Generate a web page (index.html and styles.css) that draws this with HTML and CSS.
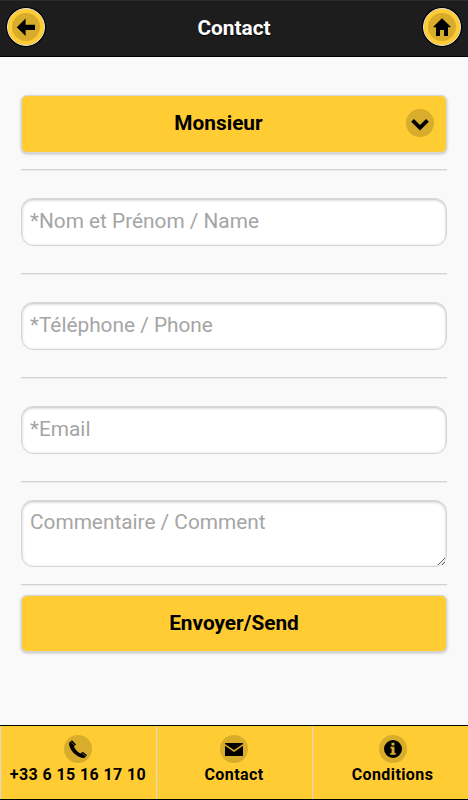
FILE: index.html
```
<!doctype html>
<html lang="fr">
<head>
<meta charset="utf-8">
<meta name="viewport" content="width=device-width, initial-scale=1.0">
<title>Contact</title>
<link rel="stylesheet" href="styles.css">
</head>
<body>

<header class="header">
	<a href="#" class="round-btn" aria-label="Retour">
		<svg class="icon" viewBox="0 0 28 28"><circle cx="14" cy="14" r="14"/><path d="M4.8 14.2L13.6 5.6V11.8H23V17H13.6V23Z"/></svg>
	</a>
	<h1>Contact</h1>
	<a href="#" class="round-btn" aria-label="Accueil">
		<svg class="icon" viewBox="0 0 28 28"><circle cx="14" cy="14" r="14"/><path d="M14 5.2L22.5 13.5V14.2H20V23H16V17H12V23H8V14.2H5.5V13.5Z"/></svg>
	</a>
</header>

<form class="content">
	<div class="field field-select">
		<button type="button" class="btn btn-select">
			<span>Monsieur</span>
			<svg class="icon arrow" viewBox="0 0 28 28"><circle cx="14" cy="14" r="14"/><path d="M7.9 10L5.2 12.7L14 21.5L22.8 12.7L20.1 10L14 16.1Z"/></svg>
		</button>
	</div>
	<div class="field">
		<input type="text" placeholder="*Nom et Prénom / Name">
	</div>
	<div class="field">
		<input type="tel" placeholder="*Téléphone / Phone">
	</div>
	<div class="field">
		<input type="email" placeholder="*Email">
	</div>
	<div class="field field-comment">
		<textarea placeholder="Commentaire / Comment"></textarea>
	</div>
	<button type="button" class="btn send"><span>Envoyer/Send</span></button>
</form>

<footer class="footer">
	<a href="#">
		<svg class="icon" viewBox="0 0 28 28"><circle cx="14" cy="14" r="14"/><path d="M5.2 7.4L8 5.2L12 9.6L9.8 11.8C11.4 14.8 13.6 17 16.4 18.4L18.6 16.8L23 20L21 22.6C19 24 15 22.4 11.6 19.6C7.6 16.4 4.6 11.4 5.2 7.4Z"/><path class="cut" d="M6.6 6.4L10.8 10.8M17.4 17.8L21.8 21.2"/></svg>
		<span>+33 6 15 16 17 10</span>
	</a>
	<a href="#">
		<svg class="icon" viewBox="0 0 28 28"><circle cx="14" cy="14" r="14"/><path d="M5 8H23V9L14 15L5 9ZM5 10.8L14 17L23 10.8V21H5Z"/></svg>
		<span>Contact</span>
	</a>
	<a href="#">
		<svg class="icon" viewBox="0 0 28 28"><circle cx="14" cy="14" r="14"/><path fill-rule="evenodd" d="M14 5A9 9 0 0 1 14 23A9 9 0 0 1 14 5ZM12.5 7.8V10.4H15.5V7.8ZM11.4 11.8V13.4H12.6V18H11.2V19.8H16.8V18H15.5V11.8Z"/></svg>
		<span>Conditions</span>
	</a>
</footer>

</body>
</html>
```

FILE: styles.css
```
* {
	box-sizing: border-box;
}
body {
	display: flex;
	flex-direction: column;
	height: 800px;
	margin: 0;
	background: #f9f9f9;
	color: #000;
	font-family: Roboto, "Liberation Sans", sans-serif;
}
a {
	color: inherit;
	text-decoration: none;
}

/* header */
.header {
	display: flex;
	align-items: center;
	justify-content: space-between;
	height: 57px;
	padding: 0 7px 3px;
	background: #1d1d1d;
	border-top: 1px solid #2a2a2a;
	border-bottom: 1px solid #000;
}
.header h1 {
	margin: 0;
	padding-top: 2px;
	color: #fff;
	font-size: 20.8px;
	line-height: 25px;
	text-shadow: 0 1px 0 #000;
}
.round-btn {
	display: flex;
	align-items: center;
	justify-content: center;
	width: 38px;
	height: 38px;
	background: #fc3;
	border: 1px solid #e4e1d8;
	border-radius: 50%;
	box-shadow: 0 0 0 1px #000;
}

/* icons */
.icon {
	display: block;
	width: 28px;
	height: 28px;
}
.icon circle {
	fill: #d8ad2b;
}
.icon .cut {
	fill: none;
	stroke: #d8ad2b;
	stroke-width: .5;
}

/* form */
.content {
	flex: 1;
	padding: 0 21px;
}
.field {
	height: 104px;
	padding-top: 28px;
	border-bottom: 1px solid #d2d4d3;
	box-shadow: 0 1px 0 #ebebeb;
}
.field-select {
	height: 113px;
	padding-top: 38px;
}
.field-comment {
	height: 103px;
	padding-top: 18px;
}
.btn {
	display: flex;
	align-items: center;
	justify-content: center;
	position: relative;
	width: 100%;
	height: 58px;
	padding: 0 0 2px;
	background: #fc3;
	border: 1px solid #d8d8d8;
	border-radius: 6px;
	box-shadow: 0 1px 3px rgba(0, 0, 0, .25);
	color: #000;
	font: bold 20.8px/26px Roboto, "Liberation Sans", sans-serif;
}
.btn-select {
	padding-right: 31px;
}
.btn .arrow {
	position: absolute;
	right: 12px;
	top: 13px;
}
.send {
	height: 57px;
	margin-top: 10px;
}
input,
textarea {
	display: block;
	width: 100%;
	height: 48px;
	margin: 0;
	padding: 0 8px 3px;
	background: #fff;
	border: 1px solid #d5d5d5;
	border-radius: 12px;
	box-shadow: inset 0 1px 3px rgba(0, 0, 0, .25);
	font: 20.8px/26px Roboto, "Liberation Sans", sans-serif;
}
textarea {
	height: 67px;
	padding: 8px;
}
::placeholder {
	color: #a5a5a5;
}

/* footer */
.footer {
	display: flex;
	height: 75px;
	background: #fc3;
	border-top: 1px solid #000;
	border-bottom: 1px solid #000;
}
.footer a {
	display: flex;
	flex-direction: column;
	align-items: center;
	width: 156px;
	padding: 9px 1px 0 0;
	border-left: 1px solid #d9d9d9;
	font-size: 16px;
	font-weight: bold;
	letter-spacing: .4px;
	line-height: 24px;
	white-space: nowrap;
}
.footer a:last-child {
	padding: 9px 0 0 4px;
}
```
